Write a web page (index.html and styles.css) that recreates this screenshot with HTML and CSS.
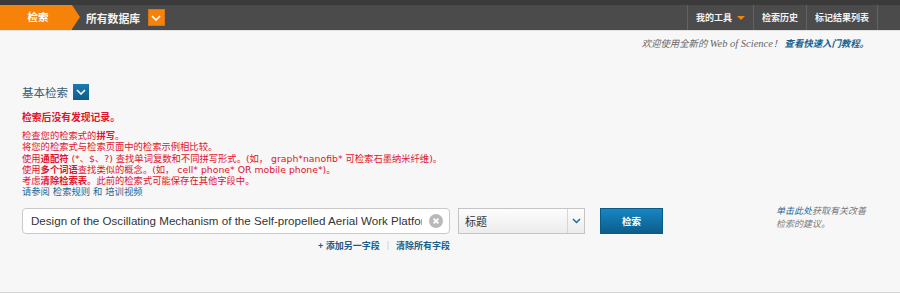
FILE: index.html
```html
<!DOCTYPE html>
<html lang="zh-CN">
<head>
  <meta charset="UTF-8">
  <title>Web of Science - 基本检索</title>
  <link rel="stylesheet" href="styles.css">
</head>
<body>
  <div class="page">
    <div class="topbar">
      <div class="tab-search">检索</div>
      <div class="db-name">所有数据库</div>
      <div class="db-drop">
        <svg width="10" height="6" viewBox="0 0 10 6"><path d="M1 1 L5 5 L9 1" fill="none" stroke="#fff" stroke-width="1.6"/></svg>
      </div>
      <div class="topnav">
        <div class="topnav-item">我的工具 <span class="tri"></span></div>
        <div class="topnav-item">检索历史</div>
        <div class="topnav-item">标记结果列表</div>
      </div>
    </div>

    <div class="welcome">欢迎使用全新的 <span class="wos">Web of Science</span>！ <a class="welcome-link">查看快速入门教程。</a></div>

    <div class="content">
      <div class="mode">
        <span class="mode-title">基本检索</span>
        <span class="mode-drop">
          <svg width="10" height="6" viewBox="0 0 10 6"><path d="M1 1 L5 5 L9 1" fill="none" stroke="#fff" stroke-width="1.6"/></svg>
        </span>
      </div>

      <div class="no-result">
        <div class="no-result-title">检索后没有发现记录。</div>
        <div>检查您的检索式的<b>拼写</b>。</div>
        <div>将您的检索式与检索页面中的检索示例相比较。</div>
        <div>使用<b>通配符</b> (*、$、?) 查找单词复数和不同拼写形式。(如， graph*nanofib* 可检索石墨纳米纤维)。</div>
        <div>使用<b>多个词语</b>查找类似的概念。(如， cell* phone* OR mobile phone*)。</div>
        <div>考虑<b>清除检索表</b>。此前的检索式可能保存在其他字段中。</div>
        <div class="help">请参阅 <a>检索规则</a> 和 <a>培训视频</a></div>
      </div>

      <div class="search-row">
        <div class="search-col">
          <div class="query">
            <div class="query-text">Design of the Oscillating Mechanism of the Self-propelled Aerial Work Platform</div>
            <span class="clear">
              <svg width="14" height="14" viewBox="0 0 14 14"><circle cx="7" cy="7" r="7" fill="#b9b9b9"/><path d="M4.6 4.6 L9.4 9.4 M9.4 4.6 L4.6 9.4" stroke="#fff" stroke-width="1.8"/></svg>
            </span>
          </div>
          <div class="field-links">
            <a>+ 添加另一字段</a>
            <span class="sep">|</span>
            <a>清除所有字段</a>
          </div>
        </div>
        <div class="field-select">
          <span class="field-value">标题</span>
          <span class="field-arrow">
            <svg width="9" height="6" viewBox="0 0 9 6"><path d="M1 1 L4.5 4.5 L8 1" fill="none" stroke="#1f6a9a" stroke-width="1.5"/></svg>
          </span>
        </div>
        <button class="search-btn">检索</button>
        <div class="hint"><a>单击此处</a>获取有关改善<br>检索的建议。</div>
      </div>
    </div>
  </div>
</body>
</html>
```

FILE: styles.css
```css
html, body {
  margin: 0;
  padding: 0;
}

body {
  background: #f7f7f7;
  font-family: "Liberation Sans", "Noto Sans CJK SC", sans-serif;
  color: #333;
}

a {
  cursor: pointer;
}

.page {
  height: 292px;
  border-bottom: 1px solid #d4d4d4;
  overflow: hidden;
}

/* top bar */
.topbar {
  display: flex;
  align-items: center;
  height: 25px;
  background: #4b4b4b;
  border-top: 5px solid #3a3a3a;
  border-bottom: 1px solid #e2e2e2;
  color: #f2f2f2;
}

.tab-search {
  position: relative;
  width: 72px;
  height: 25px;
  line-height: 25px;
  background: #f7820a;
  color: #fff;
  font-size: 10.5px;
  font-weight: bold;
  text-align: center;
  padding-left: 4px;
  box-sizing: border-box;
}

.tab-search::after {
  content: "";
  position: absolute;
  right: -8px;
  top: 0;
  border-top: 12.5px solid transparent;
  border-bottom: 12.5px solid transparent;
  border-left: 8px solid #f7820a;
}

.db-name {
  margin-left: 14px;
  font-size: 10.8px;
  font-weight: bold;
}

.db-drop {
  display: flex;
  align-items: center;
  justify-content: center;
  width: 15px;
  height: 15px;
  margin-left: 8px;
  background: #f7820a;
  border: 1px solid #d8731a;
}

.topnav {
  display: flex;
  margin-left: auto;
  margin-right: 22px;
  height: 25px;
  border-right: 1px solid #626262;
}

.topnav-item {
  display: flex;
  align-items: center;
  padding: 0 8px;
  border-left: 1px solid #626262;
  font-size: 9px;
  font-weight: bold;
}

.tri {
  display: inline-block;
  margin-left: 5px;
  border-left: 4px solid transparent;
  border-right: 4px solid transparent;
  border-top: 4px solid #f7820a;
}

/* welcome */
.welcome {
  margin-top: 7px;
  padding-right: 31px;
  text-align: right;
  font-size: 9.4px;
  line-height: 12px;
  font-style: italic;
  color: #666;
  font-family: "Liberation Serif", "Noto Sans CJK SC", serif;
}

.wos {
  font-size: 10.5px;
}

.welcome-link {
  color: #1b5f8c;
  font-weight: bold;
}

/* main */
.content {
  padding-left: 22px;
}

.mode {
  display: flex;
  align-items: center;
  margin-top: 34px;
  height: 16px;
}

.mode-title {
  font-size: 11.5px;
  color: #3a5e78;
}

.mode-drop {
  display: flex;
  align-items: center;
  justify-content: center;
  width: 16px;
  height: 16px;
  margin-left: 5px;
  background: linear-gradient(#1c7bb0, #0e5c89);
}

.no-result {
  margin-top: 11px;
  color: #e0142c;
  font-family: "DejaVu Sans", "Noto Sans CJK SC", sans-serif;
  font-size: 9.3px;
  line-height: 11.3px;
}

.no-result-title {
  font-size: 9.8px;
  font-weight: bold;
  line-height: 13px;
  margin-bottom: 6px;
}

.no-result b {
  font-weight: bold;
}

.help,
.help a {
  color: #1f6594;
}

/* search row */
.search-row {
  display: flex;
  align-items: flex-start;
  margin-top: 10px;
}

.search-col {
  width: 428px;
}

.query {
  display: flex;
  align-items: center;
  height: 26px;
  background: #fff;
  border: 1px solid #c9c9c9;
  border-radius: 4px;
  box-sizing: border-box;
  padding: 0 6px 0 8px;
}

.query-text {
  flex: 1;
  overflow: hidden;
  white-space: nowrap;
  font-size: 11.6px;
  color: #333;
}

.clear {
  display: flex;
  margin-left: 7px;
}

.field-links {
  display: flex;
  justify-content: flex-end;
  align-items: center;
  margin-top: 5px;
  font-size: 9px;
  color: #1d5c86;
  font-weight: bold;
}

.sep {
  color: #ccc;
  font-weight: normal;
  margin: 0 7px;
}

.field-select {
  display: flex;
  align-items: stretch;
  width: 127px;
  height: 26px;
  margin-left: 8px;
  box-sizing: border-box;
  border: 1px solid #c4c4c4;
  background: linear-gradient(#fdfdfd, #ececec);
}

.field-value {
  flex: 1;
  display: flex;
  align-items: center;
  padding-left: 6px;
  font-size: 11px;
  color: #333;
}

.field-arrow {
  display: flex;
  align-items: center;
  justify-content: center;
  width: 16px;
  border-left: 1px solid #d6d6d6;
}

.search-btn {
  width: 63px;
  height: 26px;
  margin-left: 15px;
  border: 1px solid #0a5a87;
  background: linear-gradient(#1786c1, #0b5d8c);
  color: #fff;
  font-family: "Noto Sans CJK SC", sans-serif;
  font-size: 9.5px;
  font-weight: bold;
  padding: 0;
}

.hint {
  margin-left: 113px;
  margin-top: -3px;
  font-size: 9px;
  line-height: 13px;
  font-style: italic;
  color: #777;
}

.hint a {
  color: #1f6594;
}
```
